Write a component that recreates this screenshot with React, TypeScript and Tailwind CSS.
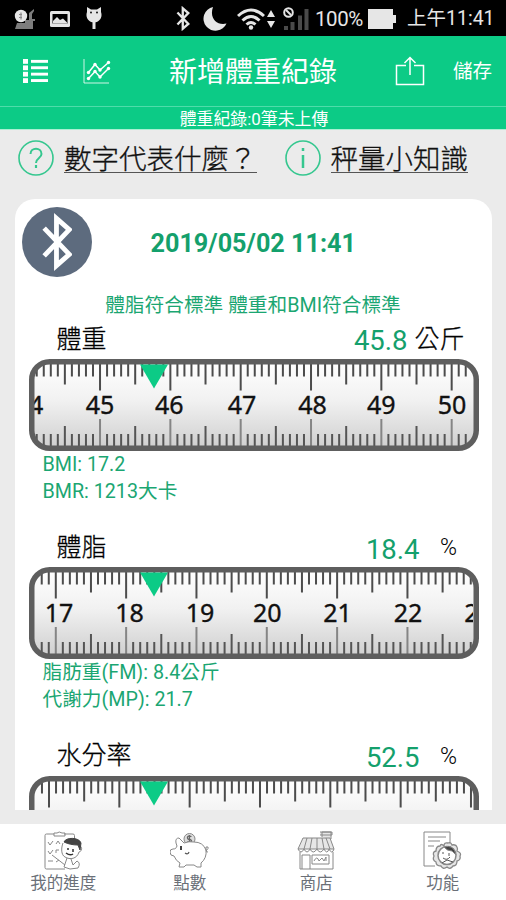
import type { ReactNode } from "react";

interface Tick {
  value: string;
  x: number;
}

interface Metric {
  name: string;
  value: string;
  unit: string;
  offset: number;
  labels: Tick[];
  notes: string[];
}

const UNIT = 70.33;

// offset = x of the first whole-number tick, label x is the number's centre
const METRICS: Metric[] = [
  {
    name: "體重",
    value: "45.8",
    unit: "公斤",
    offset: 0.7,
    labels: [
      { value: "44", x: 0 },
      { value: "45", x: 71 },
      { value: "46", x: 140.3 },
      { value: "47", x: 213 },
      { value: "48", x: 283.5 },
      { value: "49", x: 352.3 },
      { value: "50", x: 423 },
    ],
    notes: ["BMI: 17.2", "BMR: 1213大卡"],
  },
  {
    name: "體脂",
    value: "18.4",
    unit: "%",
    offset: 26.8,
    labels: [
      { value: "17", x: 30 },
      { value: "18", x: 100.6 },
      { value: "19", x: 171 },
      { value: "20", x: 238.3 },
      { value: "21", x: 308.6 },
      { value: "22", x: 379 },
      { value: "23", x: 449.5 },
    ],
    notes: ["脂肪重(FM): 8.4公斤", "代謝力(MP): 21.7"],
  },
  {
    name: "水分率",
    value: "52.5",
    unit: "%",
    offset: 20,
    labels: [],
    notes: [],
  },
];

function Ruler({ id, offset, labels }: { id: string; offset: number; labels: Tick[] }) {
  const ticks = Array.from({ length: 90 }, (_, i) => {
    const n = i - 10;
    return { n, x: offset + (n * UNIT) / 10 };
  }).filter((t) => t.x > 7 && t.x < 443);

  return (
    <svg width="450" height="92" viewBox="0 0 450 92" className="block shrink-0">
      <defs>
        <linearGradient id={`face-${id}`} x1="0" y1="0" x2="0" y2="1">
          <stop offset="0" stopColor="#ffffff" />
          <stop offset="0.45" stopColor="#f1f1f1" />
          <stop offset="1" stopColor="#cfcfcf" />
        </linearGradient>
        <clipPath id={`clip-${id}`}>
          <rect x="5" y="5" width="439" height="82" rx="13" />
        </clipPath>
      </defs>
      <rect x="2.75" y="2.75" width="444.5" height="86.5" rx="16" fill={`url(#face-${id})`} />
      <g clipPath={`url(#clip-${id})`}>
        {ticks.map(({ n, x }) => {
          const major = n % 10 === 0;
          const half = !major && n % 5 === 0;
          return (
            <g key={n} strokeWidth="2">
              <line x1={x} x2={x} y1="4" y2={major ? 31.5 : half ? 25.5 : 17.5} stroke="#4c4c4c" />
              <line
                x1={x}
                x2={x}
                y1={major ? 60 : half ? 67 : 75}
                y2="88"
                stroke={major ? "#858585" : "#555"}
              />
            </g>
          );
        })}
        {labels.map((l) => (
          <text
            key={l.value}
            x={l.x}
            y="54.7"
            textAnchor="middle"
            fill="#111"
            stroke="#111"
            strokeWidth="0.35"
            className="font-['Noto_Sans',sans-serif] text-[25px] font-normal"
          >
            {l.value}
          </text>
        ))}
      </g>
      <rect x="2.75" y="2.75" width="444.5" height="86.5" rx="18" fill="none" stroke="#5e5e5e" strokeWidth="5.5" />
      <path d="M111 5.5h28L125 29.5z" fill="#0ccb86" />
    </svg>
  );
}

function MetricBlock({ metric, id }: { metric: Metric; id: string }) {
  return (
    <div className="flex h-[208.3px] shrink-0 flex-col pl-[14px]">
      <div className="flex h-[42px] items-center text-[25px] leading-none">
        <span className="ml-7 w-[200px] pt-[2px] font-light text-black [-webkit-text-stroke:0.3px_black]">
          {metric.name}
        </span>
        <span className="ml-auto pt-1.5 text-[27.5px] text-[#14a06c]">{metric.value}</span>
        <span
          className={
            metric.unit === "%"
              ? "mr-[23px] ml-[9px] w-[40px] pt-[3px] text-center text-[23px] font-light text-black"
              : "mr-[27px] ml-[7px] w-[50px] pt-[2px] text-center font-light text-black [-webkit-text-stroke:0.3px_black]"
          }
        >
          {metric.unit}
        </span>
      </div>
      <Ruler id={id} offset={metric.offset} labels={metric.labels} />
      <div className="pl-3.5 text-[19.7px] leading-[27px] text-[#1ba672]">
        {metric.notes.map((note) => (
          <p key={note}>{note}</p>
        ))}
      </div>
    </div>
  );
}

function BluetoothGlyph({ className, width }: { className: string; width: number }) {
  return (
    <svg viewBox="0 0 28 54" fill="none" stroke="currentColor" strokeWidth={width} className={className}>
      <path d="M2 14 25.500 38.500 13.500 49V5L25.500 15.500 2 40" />
    </svg>
  );
}

function StatusBar() {
  return (
    <div className="flex h-9 shrink-0 items-center bg-black pt-px text-[#e6e6e6]">
      <svg width="22" height="22" viewBox="0 0 22 22" className="ml-[14px]">
        <path d="M1 21l2-6h8v-3h4V5l5-4v2l-2 3v5h3v2h-2v8z" fill="#7d7d7d" />
        <circle cx="7" cy="8" r="6.2" fill="#e6e6e6" />
        <path d="M7 4.500v7M5 6.500h3M5 9.500h3" stroke="#888" strokeWidth="1.2" />
      </svg>
      <svg width="20" height="16" viewBox="0 0 20 16" className="ml-[14px]">
        <rect width="20" height="16" rx="1.5" fill="currentColor" />
        <path d="M2.500 3h15v9.500h-15z" fill="#000" />
        <path d="M3 12.500V10l4-4 3 3 3-1.500 4 4v1z" fill="currentColor" />
      </svg>
      <svg width="16" height="23" viewBox="0 0 16 23" className="ml-4">
        <path d="M1 0l4 2.500h6L15 0v5c2 6-2 10.500-7 10.500S-1 11 1 5z" fill="currentColor" />
        <path d="M8 15v7" stroke="currentColor" strokeWidth="3" />
        <circle cx="5" cy="5.500" r="0.900" fill="#000" />
        <circle cx="11" cy="5.500" r="0.900" fill="#000" />
      </svg>
      <BluetoothGlyph width={5} className="ml-[74px] h-[25px] w-[14px]" />
      <svg width="24" height="24" viewBox="0 0 24 24" className="ml-[13px]">
        <path d="M10 0a12 12 0 1 0 13.5 16.5C14 19 6 11 10 0z" fill="currentColor" />
      </svg>
      <svg width="28" height="22" viewBox="0 0 28 22" fill="none" stroke="currentColor" strokeWidth="3" className="ml-2.5">
        <path d="M1 8q13-12 26 0M5.500 12.500q8.500-8 17 0M9.500 16.500q4.500-4 9 0" />
        <circle cx="14" cy="19.500" r="2.200" fill="currentColor" stroke="none" />
      </svg>
      <svg width="8" height="18" viewBox="0 0 8 18" className="ml-[2px]">
        <path d="M0 7l4-7 4 7zM0 11l4 7 4-7z" fill="currentColor" />
      </svg>
      <svg width="26" height="23" viewBox="0 0 26 23" className="ml-2">
        <path d="M3 19v4M9.500 15v8M17 8.500V23M23.500 2v21" stroke="#4a4a4a" strokeWidth="4" />
        <circle cx="5.500" cy="5.500" r="4.300" fill="none" stroke="currentColor" strokeWidth="2" />
        <path d="M3 3l5 5" stroke="currentColor" strokeWidth="2" />
      </svg>
      <span className="ml-[6px] w-[48px] pt-px text-[20.500px] tracking-[-0.4px]">100%</span>
      <svg width="28" height="20" viewBox="0 0 28 20" className="ml-[5px]">
        <path d="M0 0h25v6h3v8h-3v6H0z" fill="currentColor" />
      </svg>
      <span className="ml-[11px] pt-px text-[19.500px] whitespace-nowrap">上午11:41</span>
    </div>
  );
}

function Header() {
  return (
    <header className="shrink-0 border-b border-[#a9f0d3] bg-[#0ccb86] text-white">
      <div className="flex h-[71px] items-center border-b border-[#4fdcaa]">
        <svg width="26" height="24" viewBox="0 0 26 24" fill="currentColor" className="ml-[23px]">
          {[0, 6.4, 12.8, 19.2].map((y) => (
            <g key={y}>
              <rect x="0" y={y} width="5" height="4.8" />
              <rect x="8" y={y + 0.9} width="17" height="2.9" />
            </g>
          ))}
        </svg>
        <svg width="28" height="25" viewBox="0 0 28 25" fill="none" stroke="currentColor" className="ml-[34px]">
          <path d="M1 0v24h25" strokeWidth="1" opacity="0.8" />
          <path d="M5.500 13.500 12 5.500l5 5.500 8.500-7.500M5.500 19.500l6.500-7 5 5.500 8.500-8.500" strokeWidth="1.500" />
          <g fill="currentColor" stroke="none">
            <circle cx="5.500" cy="13.500" r="1.700" />
            <circle cx="12" cy="5.500" r="1.700" />
            <circle cx="17" cy="11" r="1.700" />
            <circle cx="25.500" cy="3.500" r="1.700" />
            <circle cx="5.500" cy="19.500" r="1.700" />
            <circle cx="12" cy="12.500" r="1.700" />
            <circle cx="17" cy="18" r="1.700" />
            <circle cx="25.500" cy="9.500" r="1.700" />
          </g>
        </svg>
        <h1 className="ml-[58px] w-[170px] pt-[3px] text-[28px] leading-none whitespace-nowrap">新增體重紀錄</h1>
        <svg width="30" height="30" viewBox="0 0 30 30" fill="none" stroke="currentColor" strokeWidth="1.500" className="ml-[56px]">
          <path d="M11 9.500H1.500v19h27v-19H19M15 19V2M9.500 7 15 1.500 20.500 7" />
        </svg>
        <span className="ml-[28px] pt-0.5 text-[19.500px]">儲存</span>
      </div>
      <p className="h-[22px] pl-0.5 text-center text-[16.900px] leading-[24px]">體重紀錄:0筆未上傳</p>
    </header>
  );
}

function HelpLink({ icon, children }: { icon: ReactNode; children: string }) {
  return (
    <div className="flex items-center gap-2.5">
      <svg width="36" height="36" viewBox="0 0 36 36" fill="none" stroke="#35c78f" strokeWidth="1.600">
        <circle cx="18" cy="18" r="17" />
        {icon}
      </svg>
      <span className="h-[29px] border-b-[1.500px] border-[#555] text-[27.500px] leading-[31px] font-light text-[#111] [-webkit-text-stroke:0.3px_#111]">
        {children}
      </span>
    </div>
  );
}

const NAV: { label: string; icon: ReactNode }[] = [
  {
    label: "我的進度",
    icon: (
      <>
        <path d="M10 3H2.500a1.500 1.500 0 0 0-1.500 1.500v32A1.500 1.500 0 0 0 2.500 38H21M20 3h9a1.500 1.500 0 0 1 1.500 1.500V8M10 5V2h3q2-2 5 0h3v3z" />
        <path d="M4 11l2 3 3-4M12 13l2-3 2 3M4 20l2 3 3-4M12 22v-3h3M4 30h5M12 31l3-2M8 24l13 10" />
        <path d="M19 12c-2 5-2 12 2 14 5 3 12 2 14-5 4-1 3-7 0-6" fill="white" />
        <path d="M20 11c2-5 15-5 17 1l-1 7-2-5c-5 0-10-1-14-3z" fill="#444" stroke="#444" />
        <path d="M24 17v2M29 18v3M22 22q4 3 7 1" stroke="#333" strokeWidth="1.500" />
        <path d="M23 27l-3 9 6 2 8-1q3-5-1-7l-4 4-2-6" />
      </>
    ),
  },
  {
    label: "點數",
    icon: (
      <>
        <circle cx="19.500" cy="8" r="5.500" fill="#ddd" />
        <path d="M21.500 5.500c-5-2-5 3-2 3s3 4-2 2M19.500 4v8" strokeWidth="1.300" stroke="#666" />
        <path
          d="M14 12 9 7q-4 0-3 5l1 3c-1 2-1 3-4 3q-3 0-3 3 0 4 4 4 2 5 6 7l-1 4h5l2-2h8l3 2h4v-4q6-5 5-13-3-8-12-8-5-1-10 1z"
          fill="white"
        />
        <path d="M36 20q3-3 2-4-3-1-2 2 0 4 2 3" />
        <path d="M11 15v4" stroke="#444" strokeWidth="2" />
        <path d="M15 22q3 2 4-1" stroke="#555" strokeWidth="1.200" />
      </>
    ),
  },
  {
    label: "商店",
    icon: (
      <>
        <path d="M25 6V1h9v7M23 1h12v3H23M6 7h27l4 11H1z" fill="#e6e6e6" />
        <path d="M10 7 7 18M15 7l-2 11M20 7v11M25 7l2 11M29 7l4 11M1 18q3 6 6 0 3 6 6 0 3 6 7 0 3 6 7 0 3 6 5 0 3 6 5 0" />
        <path d="M3 21v17h33V21M5 38V24h8v14M15 24h17v9H15zM17 30q3-6 5 0l3-3 2 3 2-4v4" />
      </>
    ),
  },
  {
    label: "功能",
    icon: (
      <>
        <path d="M12 35H1V1h26v11M5 6h18M5 10h12M5 15h6" />
        <path
          d="M21 15q0-4 4-3 3-1 4 2 4-1 5 2 1 2 0 4 5 2 3 5 1 4-3 5 0 5-4 5-3 4-6 1-4 3-6-1-5 0-5-4-4-2-2-6-2-4 2-5 0-5 4-5 1-3 4 0z"
          fill="#e6e6e6"
          strokeWidth="1.300"
        />
        <circle cx="24" cy="24.500" r="9" fill="white" strokeWidth="1.500" />
        <path d="M21 16q10-3 12 8l-4-4q-5 0-8-4z" fill="#444" />
        <path d="M20 21v2M26 22v3M20 27q4 3 7-1M19 32l5-3 6 2" stroke="#555" />
      </>
    ),
  },
];

function BottomNav() {
  return (
    <nav className="grid h-[76px] shrink-0 grid-cols-4 bg-white">
      {NAV.map((item) => (
        <div key={item.label} className="flex flex-col items-center gap-0.5 pt-[7px] text-[#6b7078]">
          <svg width="39" height="39" viewBox="0 0 39 39" fill="none" stroke="#888" strokeWidth="1">
            {item.icon}
          </svg>
          <span className="text-[16.500px] leading-[24px]">{item.label}</span>
        </div>
      ))}
    </nav>
  );
}

export default function App() {
  return (
    <div className="flex h-[900px] w-[506px] flex-col overflow-hidden bg-[#ebebeb] font-[Roboto,'Noto_Sans_CJK_TC',sans-serif]">
      <StatusBar />
      <Header />

      <div className="flex h-[69px] shrink-0 items-start gap-[28px] pt-[10px] pl-[18px]">
        <HelpLink
          icon={
            <>
              <path d="M12.500 14c0-7 11-7 11 0 0 4-5.500 4-5.500 9" strokeWidth="2" />
              <path d="M18 25v3" strokeWidth="2.200" />
            </>
          }
        >
          數字代表什麼？
        </HelpLink>
        <HelpLink icon={<path d="M18 15v13M18 8v3" strokeWidth="2.500" />}>秤量小知識</HelpLink>
      </div>

      <main className="mx-[14.500px] flex h-[611px] shrink-0 flex-col overflow-hidden rounded-t-[20px] bg-white">
        <div className="flex h-[88px] shrink-0 items-center">
          <div className="mb-0.5 ml-[7px] flex size-[70px] items-center justify-center rounded-full bg-[#5d6b7e] text-white">
            <BluetoothGlyph width={4.5} className="h-[58px] w-[30px]" />
          </div>
          <span className="ml-[59px] pt-0.5 text-[25.200px] font-bold text-[#14a06c]">2019/05/02 11:41</span>
        </div>
        <p className="h-[30px] shrink-0 text-center text-[19.700px] leading-[37px] text-[#1ba672]">
          體脂符合標準 體重和BMI符合標準
        </p>
        {METRICS.map((m, i) => (
          <MetricBlock key={m.name} metric={m} id={String(i)} />
        ))}
      </main>

      <div className="h-[14px] shrink-0" />
      <BottomNav />
    </div>
  );
}
